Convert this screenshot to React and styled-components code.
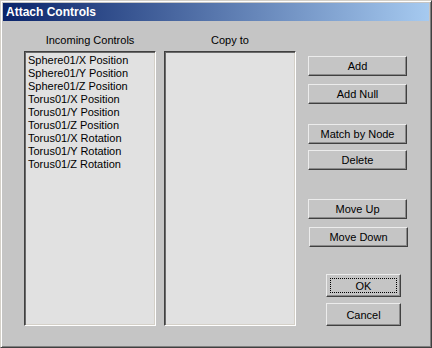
import React from 'react';
import styled, { createGlobalStyle } from 'styled-components';

const GlobalStyle = createGlobalStyle`
  html, body {
    margin: 0;
    padding: 0;
    background: #c5c5c5;
  }
`;

const Window = styled.div`
  width: 432px;
  height: 348px;
  box-sizing: border-box;
  background: #c5c5c5;
  border-top: 1px solid #d4d0c8;
  border-left: 1px solid #d4d0c8;
  border-right: 1px solid #404040;
  border-bottom: 1px solid #404040;
  box-shadow: inset 1px 1px #ffffff, inset -1px -1px #808080;
  padding: 2px;
  display: flex;
  flex-direction: column;
  font-family: Tahoma, 'Liberation Sans', Arial, sans-serif;
  font-size: 11px;
  color: #000;
`;

const TitleBar = styled.div`
  height: 18px;
  background: linear-gradient(to right, #0a246a, #a6caf0);
  color: #fff;
  font-weight: bold;
  font-size: 12px;
  line-height: 18px;
  padding-left: 3px;
`;

const Body = styled.div`
  flex: 1;
  display: flex;
  padding: 12px 0 0 21px;
`;

const ListColumn = styled.div`
  width: 132px;
  margin-right: ${({ $gap }) => $gap}px;
  display: flex;
  flex-direction: column;
`;

const Label = styled.div`
  height: 14px;
  line-height: 14px;
  text-align: center;
  margin-bottom: 4px;
`;

const ListBox = styled.div`
  height: 275px;
  box-sizing: border-box;
  background: #e1e1e1;
  border-top: 1px solid #404040;
  border-left: 1px solid #404040;
  border-right: 1px solid #ffffff;
  border-bottom: 1px solid #ffffff;
  box-shadow: inset 1px 1px #6a6a6a, inset -1px -1px #d4d0c8;
  padding: 2px 3px;
`;

const Item = styled.div`
  height: 13px;
  line-height: 13px;
  white-space: nowrap;
`;

const ButtonColumn = styled.div`
  width: 99px;
  display: flex;
  flex-direction: column;
  padding-top: 23px;
`;

const Button = styled.button`
  box-sizing: border-box;
  width: ${({ $wide }) => ($wide ? '99px' : '75px')};
  height: ${({ $wide }) => ($wide ? '20px' : '23px')};
  margin-top: ${({ $gap }) => $gap || 0}px;
  margin-left: ${({ $shift }) => $shift || 0}px;
  padding: 0;
  background: #c5c5c5;
  font: inherit;
  color: #000;
  border-top: 1px solid #ececec;
  border-left: 1px solid #ececec;
  border-right: 1px solid #404040;
  border-bottom: 1px solid #404040;
  box-shadow: inset -1px -1px #8a8a8a;
  position: relative;
  cursor: default;
`;

const Focus = styled.span`
  position: absolute;
  inset: 3px;
  border: 1px dotted #000;
`;

const incoming = [
  'Sphere01/X Position',
  'Sphere01/Y Position',
  'Sphere01/Z Position',
  'Torus01/X Position',
  'Torus01/Y Position',
  'Torus01/Z Position',
  'Torus01/X Rotation',
  'Torus01/Y Rotation',
  'Torus01/Z Rotation',
];

export default function App() {
  return (
    <>
      <GlobalStyle />
      <Window>
        <TitleBar>Attach Controls</TitleBar>
        <Body>
          <ListColumn $gap={8}>
            <Label>Incoming Controls</Label>
            <ListBox>
              {incoming.map((name) => (
                <Item key={name}>{name}</Item>
              ))}
            </ListBox>
          </ListColumn>
          <ListColumn $gap={12}>
            <Label>Copy to</Label>
            <ListBox />
          </ListColumn>
          <ButtonColumn>
            <Button $wide>Add</Button>
            <Button $wide $gap={8}>Add Null</Button>
            <Button $wide $gap={20}>Match by Node</Button>
            <Button $wide $gap={6}>Delete</Button>
            <Button $wide $gap={29}>Move Up</Button>
            <Button $wide $gap={8} $shift={1}>Move Down</Button>
            <Button $gap={27} $shift={18}>
              <Focus />
              OK
            </Button>
            <Button $gap={6} $shift={18}>Cancel</Button>
          </ButtonColumn>
        </Body>
      </Window>
    </>
  );
}
